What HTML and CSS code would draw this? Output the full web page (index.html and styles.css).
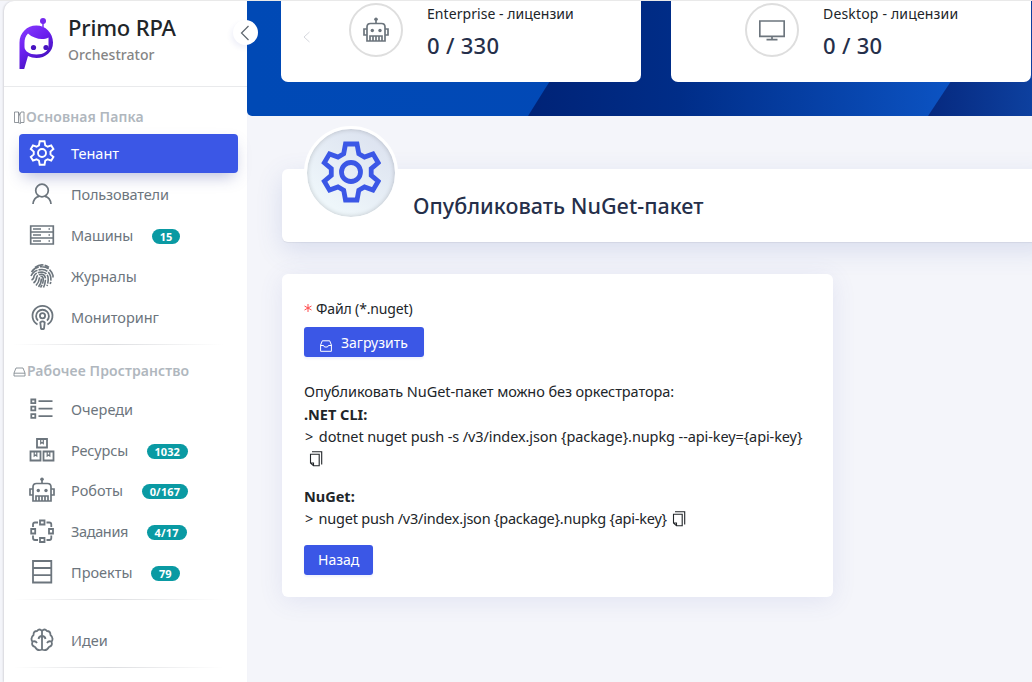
FILE: index.html
```html
<!DOCTYPE html>
<html lang="ru">
<head>
<meta charset="utf-8">
<title>Primo RPA Orchestrator</title>
<link rel="stylesheet" href="styles.css">
</head>
<body>
<svg class="defs" width="0" height="0" aria-hidden="true">
  <defs>
    <linearGradient id="logo" x1="0" y1="0" x2="0.6" y2="1"><stop offset="0" stop-color="#8a3dff"/><stop offset="0.5" stop-color="#6a1fee"/><stop offset="1" stop-color="#3d0fb4"/></linearGradient>
    <symbol id="gear" viewBox="0 0 60 62"><path fill="none" stroke="currentColor" d="M24.500 3h11.500l1.800 9.800 5.700 3.300 8.500-3.200 5.200 8.800-7 6v6.600l7 6-5.200 8.800-8.500-3.200-5.700 3.300-1.800 9.800h-11.500l-1.800-9.800-5.700-3.300-8.500 3.200-5.200-8.800 7-6v-6.600l-7-6 5.200-8.800 8.500 3.200 5.700-3.300z"/><circle cx="30" cy="31" r="9.500" fill="none" stroke="currentColor"/></symbol>
    <symbol id="robot" viewBox="0 0 26 26"><g fill="none" stroke="currentColor" stroke-width="1.700"><path d="M4 24V10q0-3.500 3.500-3.500h11q3.500 0 3.500 3.500v14zM13 3v3.500M4 12H1v6h3M22 12h3v6h-3M7 24v-5h12v5M10 19v5M13 19v5M16 19v5"/></g><g fill="currentColor"><circle cx="13" cy="2.200" r="1.800"/><circle cx="9.300" cy="13.500" r="1.700"/><circle cx="17" cy="13.500" r="1.700"/></g></symbol>
    <symbol id="copy" viewBox="0 0 14 16"><path fill="none" stroke="currentColor" stroke-width="1.100" d="M3 .8h9.700v12.700M1.500 3.200h8.700v11.600H4.500L1.500 12zM1.500 12h3v2.600"/></symbol>
  </defs>
</svg>
<div class="app">
  <aside class="sidebar">
    <header class="brand">
      <svg class="logo" width="34" height="52" viewBox="0 0 34 52"><path fill="url(#logo)" fill-rule="evenodd" d="M.5 51V24.500C.5 15 8 7.500 17.300 7.500S34 15 34 24.500 26.500 40 17.500 40c-3 0-6-.7-8.500-2L5.200 51zM5.500 25v4c0 4 5 7.500 12 7.500S29.500 33 29.500 28v-8.500C24 22.500 15 21 9 15.500 6.500 18 5.500 21 5.500 25z"/><path stroke="#7c35fa" stroke-width="1.500" d="M24 2v8"/><circle cx="24" cy="3" r="3" fill="#7529ee"/><circle cx="14.500" cy="29.500" r="2.600" fill="#4713c1"/><circle cx="27" cy="29.500" r="2.600" fill="#4713c1"/></svg>
      <div class="brand-text"><span class="brand-name">Primo RPA</span><span class="brand-sub">Orchestrator</span></div>
    </header>
    <nav class="nav">
      <h2 class="group"><svg width="12" height="13" viewBox="0 0 12 13" fill="none" stroke="#777e85" stroke-width=".8"><path d="M1.500 1h4v10.500h-4zM5.500 1L7 4.500l.5 8-2.500-1M6.500 4.500L8 1h3v10.500H8"/></svg><span>Основная Папка</span></h2>
      <a class="item active"><svg class="gear-sm" width="24" height="26"><use href="#gear"/></svg><span>Тенант</span></a>
      <a class="item"><svg width="26" height="26" viewBox="0 0 26 26" fill="none" stroke="currentColor" stroke-width="1.700"><circle cx="13" cy="9.500" r="6.300"/><path d="M4 23c.5-5 3-7 6-7.700M22 23c-.5-5-3-7-6-7.700"/></svg><span class="snug">Пользователи</span></a>
      <a class="item"><svg width="26" height="26" viewBox="0 0 26 26" fill="none" stroke="currentColor" stroke-width="1.700"><path d="M1.700 4h22.600v18H1.700zM1.700 10h22.600M1.700 16h22.600"/><path d="M4 7h8M4 13h8M4 19h8M19.500 7h1.500M19.500 13h1.500M19.500 19h1.500"/></svg><span class="snug">Машины</span><b class="badge">15</b></a>
      <a class="item"><svg width="26" height="26" viewBox="0 0 26 26" fill="none" stroke="currentColor" stroke-width="1.600" stroke-dasharray="9 1.200"><path d="M6 4.300Q13-.5 20 4.300M2.500 9Q7 3 13 3.800q8 0 11 8.700v2M2 13q3-6.500 11-6.500 6 0 8.500 6.500 1 4-.3 8M2.500 17q2.500-1 2.500-4 2-4 8-4 5 .5 6 5 .8 4-1 9M4.500 20q3-2 3.200-6 1-3 5.300-2.700 3.500.5 3.500 5-.2 4.500-2 8.200M7 22.500q3-3 3.400-7.500.5-2 2.600-1.500 1.500.5 1.200 4-.5 4-2.700 7M12.400 15.500q0 5-3 8.500"/></svg><span>Журналы</span></a>
      <a class="item"><svg width="26" height="26" viewBox="0 0 26 26" fill="none" stroke="currentColor" stroke-width="1.800"><path d="M8.500 20.500a10 10 0 1 1 10 0M9 16.700a6.400 6.400 0 1 1 9 0"/><circle cx="13.500" cy="11.800" r="2.600"/><path d="M11.300 18.500q2.200-2.200 4.400 0L15 24.500q-1.500 1.500-3 0z"/></svg><span>Мониторинг</span></a>
      <hr class="rule">
      <h2 class="group second"><svg width="13" height="12" viewBox="0 0 13 12" fill="none" stroke="#858c93" stroke-width=".9"><path d="M1 8l2-5h7l2 5v3H1zM1 8.200h11"/></svg><span>Рабочее Пространство</span></h2>
      <a class="item"><svg width="26" height="26" viewBox="0 0 26 26" fill="none" stroke="currentColor" stroke-width="1.800"><path d="M2.300 3.500h4v3.700h-4zM2.300 10.700h4v3.700h-4zM2.300 18.200h4v3.700h-4zM9.500 5.200H23.500M9.500 12.700H23.500M9.500 20.200H23.500"/></svg><span>Очереди</span></a>
      <a class="item compact"><svg width="26" height="26" viewBox="0 0 26 26" fill="none" stroke="currentColor" stroke-width="1.800"><path d="M8 2h10v8.500H8zM1.500 14.500h10v9h-10zM14.500 14.500h10v9h-10z"/><path d="M11.700 2.500v4l1.300-1 1.300 1v-4M5.200 15v4l1.300-1 1.300 1v-4M18.200 15v4l1.300-1 1.300 1v-4" stroke-width="1.200"/></svg><span class="snug">Ресурсы</span><b class="badge">1032</b></a>
      <a class="item"><svg width="26" height="26"><use href="#robot"/></svg><span>Роботы</span><b class="badge wide">0/167</b></a>
      <a class="item"><svg width="26" height="26" viewBox="0 0 26 26" fill="none" stroke="currentColor" stroke-width="1.800"><path d="M11 2.500h4.500v4H11zM11 20h4.500v4H11zM2.200 11h4v4.500h-4zM20 11h4v4.500h-4zM9 4.500H6q-2 0-2 2V9M17.500 4.500h2.800q2 0 2 2V9M9 22H6q-2 0-2-2v-2.500M17.500 22h2.800q2 0 2-2v-2.500"/></svg><span class="tight">Задания</span><b class="badge wide">4/17</b></a>
      <a class="item"><svg width="26" height="26" viewBox="0 0 26 26" fill="none" stroke="currentColor" stroke-width="1.800"><path d="M4 2h18.300v21.500H4zM4 9h18.300M4 16.200h18.300"/></svg><span>Проекты</span><b class="badge">79</b></a>
      <hr class="rule">
      <a class="item last"><svg width="26" height="26" viewBox="0 0 26 26" fill="none" stroke="currentColor" stroke-width="1.800"><path d="M13 4q-2.500-3-5 0-3.500 0-3.500 4Q1 11 3.500 15q-1.500 3.500 2.500 5 2.500 4.500 7 2.500 4.500 2 7-2.500 4-1.500 2.500-5 2.500-4-1-7 0-4-3.500-4-2.500-3-5 0zM13 4v18.500M13 9q-3 0-3.500 3M13 9q3 0 3.500 3M3.500 14.500q3-1 4.500 1.500M22.500 14.500q-3-1-4.500 1.500"/></svg><span>Идеи</span></a>
      <hr class="rule">
    </nav>
    <button class="collapse" aria-label="Свернуть"><svg width="10" height="16" viewBox="0 0 10 16" fill="none" stroke="#5e666e" stroke-width="1.200"><path d="M8.500 1L1.500 8l7 7"/></svg></button>
  </aside>
  <main class="main">
    <section class="hero">
      <svg class="hero-bg" viewBox="0 0 785 115" preserveAspectRatio="none"><defs><linearGradient id="ha"><stop offset="0" stop-color="#0049b5"/><stop offset="1" stop-color="#0449b8"/></linearGradient><linearGradient id="hb"><stop offset="0" stop-color="#002377"/><stop offset=".3" stop-color="#002d88"/><stop offset=".85" stop-color="#0c54c4"/></linearGradient><linearGradient id="hc"><stop offset="0" stop-color="#06297f"/><stop offset="1" stop-color="#0d409f"/></linearGradient></defs><path fill="url(#ha)" d="M0 0h785v115H0z"/><path fill="url(#hb)" d="M281 115L353 0h432v115z"/><path fill="url(#hc)" d="M681 115L757 0h28v115z"/></svg>
      <article class="license"><svg class="prev" width="8" height="12" viewBox="0 0 8 12" fill="none" stroke="#d5d7dd"><path d="M6.500 1L1 6l5.500 5"/></svg><div class="ring"><svg width="26" height="26"><use href="#robot"/></svg></div><div class="figures"><span class="lic-name">Enterprise - лицензии</span><strong class="lic-count">0 / 330</strong></div></article>
      <article class="license"><div class="ring"><svg width="26" height="26" viewBox="0 0 26 26" fill="none" stroke="currentColor" stroke-width="1.700"><path d="M.8 4h24.400v15.300H.8zM13 19.500V22M7.500 22.600h11"/></svg></div><div class="figures"><span class="lic-name desktop">Desktop - лицензии</span><strong class="lic-count">0 / 30</strong></div></article>
    </section>
    <section class="title-card"><div class="title-icon"><svg class="gear-lg" width="60" height="62"><use href="#gear"/></svg></div><h1>Опубликовать NuGet-пакет</h1></section>
    <section class="form-card">
      <label class="file-label"><svg width="8" height="8" viewBox="0 0 8 8" stroke="#ff4d4f"><path d="M4 0v8M.5 2l7 4M7.500 2l-7 4"/></svg><span>Файл (*.nuget)</span></label>
      <button class="btn upload"><svg width="12" height="12" viewBox="0 0 12 12" fill="none" stroke="#fff"><path d="M.6 5L2.300.8h7.400L11.400 5v6.300H.6zM.6 5.500h3L4.500 7h3l.9-1.500h3"/></svg><span>Загрузить</span></button>
      <p class="text intro">Опубликовать NuGet-пакет можно без оркестратора:</p>
      <p class="text strong">.NET CLI:</p>
      <p class="text command"><span class="prompt">&gt;</span> dotnet nuget push -s /v3/index.json {package}.nupkg --api-key={api-key}</p>
      <p class="text icon-line"><svg width="14" height="16"><use href="#copy"/></svg></p>
      <p class="text strong nuget">NuGet:</p>
      <p class="text with-icon"><span><span class="prompt">&gt;</span> nuget push /v3/index.json {package}.nupkg {api-key}</span><svg width="14" height="16"><use href="#copy"/></svg></p>
      <button class="btn back"><span>Назад</span></button>
    </section>
  </main>
</div>
</body>
</html>
```
FILE: styles.css
```css
* { box-sizing: border-box; }
body { margin: 0; background: #f4f5fa; color: #212529; font-family: "Noto Sans", "Open Sans", sans-serif; font-size: 15px; }
.defs { position: absolute; }
.app { display: flex; width: 1032px; height: 682px; overflow: hidden; border-top: 1px solid #e9e9e9; padding-left: 4px; }
.sidebar { position: relative; flex: 0 0 243px; height: 681px; background: #fff; border-radius: 10px 0 0 0; box-shadow: -1px 0 2px rgba(0,0,0,.12); }
.brand { display: flex; height: 86px; padding: 14px 0 0 15px; border-bottom: 1px solid #e9eaec; }
.logo { flex: none; margin-top: 3px; }
.brand-text { display: flex; flex-direction: column; margin-left: 15px; }
.brand-name { font-size: 22px; font-weight: 500; line-height: 24px; letter-spacing: -.17px; }
.brand-sub { font-size: 14px; font-weight: 500; line-height: 20px; margin-top: 6px; letter-spacing: .05px; color: #858585; }
.nav { padding: 20px 9px 0; }
.group { display: flex; align-items: center; gap: 1px; height: 20px; margin: 0 0 7px; font-size: 14px; font-weight: 600; letter-spacing: .1px; color: #b0b7be; }
.group span { padding-bottom: 2px; }
.group.second { margin: 16px 0 9px; }
.item { display: flex; align-items: center; height: 39px; margin: 0 0 2px 6px; padding: 0 0 2px 10px; font-size: 14.500px; color: #6c757d; border-radius: 4px; white-space: nowrap; }
.item.compact { margin-bottom: 1px; }
.item svg { flex: none; width: 26px; }
.item span { margin-left: 16px; }
.item .snug { letter-spacing: -.15px; }
.item .tight { letter-spacing: -.36px; }
.active { background: #3b57e6; color: #fff; box-shadow: 0 7px 16px -4px rgba(50,60,150,.35); }
.gear-sm { stroke-width: 4.600; }
.badge { height: 15px; margin: 3px 0 0 18.500px; padding: 0 8px; border-radius: 8px; background: #0a9aa3; color: #fff; font-size: 11px; font-weight: 700; line-height: 15px; }
.badge.wide { letter-spacing: .2px; }
.rule { height: 1px; margin: 7px 15px 0 0; border: 0; background: linear-gradient(90deg, transparent, #dcdde0 45%, transparent); }
.last { margin-top: 21px; }
.collapse { position: absolute; z-index: 3; left: 229px; top: 19px; display: flex; align-items: center; justify-content: center; width: 25px; height: 25px; padding: 0 1px 0 0; border: 0; border-radius: 50%; background: #fff; box-shadow: -2px 3px 5px rgba(60,80,180,.08); }
.main { flex: 1; min-width: 0; }
.hero { position: relative; display: flex; gap: 30px; height: 115px; padding-left: 34px; border-radius: 0 0 0 5px; overflow: hidden; }
.hero-bg { position: absolute; inset: 0; width: 100%; height: 100%; }
.license { position: relative; flex: 0 0 360px; display: flex; height: 81px; padding: 2px 0 0 68px; border-radius: 0 0 7px 7px; background: #fff; }
.license + .license { padding-left: 74px; }
.prev { position: absolute; left: 22px; top: 30px; }
.ring { display: flex; align-items: center; justify-content: center; flex: none; width: 54px; height: 54px; border: 2px solid #dedede; border-radius: 50%; color: #6c757d; }
.figures { display: flex; flex-direction: column; margin-left: 24px; }
.lic-name { font-size: 14px; line-height: 22px; letter-spacing: .06px; }
.desktop { letter-spacing: .17px; }
.lic-count { font-size: 22px; line-height: 32px; font-weight: 500; letter-spacing: .3px; color: #252f4a; margin-top: 4px; }
.title-card { display: flex; height: 73px; margin: 53px -20px 0 35px; padding-left: 22px; background: #fff; border-radius: 6px; box-shadow: 0 8px 26px rgba(80,100,180,.17), 0 1px 1px rgba(0,0,0,.06); }
.title-icon { display: flex; align-items: center; justify-content: center; flex: none; width: 94px; height: 94px; margin-top: -43px; padding-bottom: 2px; border: 3px solid #fff; border-radius: 50%; color: #3b57e6; background: linear-gradient(215deg, #d9dfee, #eef6fa 80%); box-shadow: inset 0 0 5px rgba(0,0,0,.2); }
.gear-lg { stroke-width: 4.800; }
.title-card h1 { margin: 21px 0 0 15px; font-size: 21.500px; line-height: 32px; font-weight: 500; letter-spacing: .03px; color: #252f4a; white-space: nowrap; }
.form-card { width: 551px; height: 323px; margin: 32px 0 0 35px; padding: 23px 22px; background: #fff; border-radius: 6px; box-shadow: 0 4px 24px rgba(80,90,180,.11); }
.file-label { display: flex; align-items: center; gap: 4px; height: 22px; font-size: 14px; letter-spacing: -.14px; }
.btn { display: flex; align-items: center; height: 30px; padding: 0 14px; border: 0; border-radius: 3px; background: #3b57e6; color: #fff; font: 14px "Noto Sans", sans-serif; box-shadow: 0 2px 2px rgba(59,87,230,.08); }
.upload { width: 120px; margin-top: 8px; padding: 0 0 0 16px; gap: 9px; }
.upload svg { margin-top: 8px; }
.text { display: flex; margin: 0; height: 22.500px; line-height: 22.500px; font-size: 14.500px; white-space: nowrap; }
.intro { margin-top: 23px; letter-spacing: -.08px; }
.strong { font-weight: 700; }
.command { display: block; letter-spacing: -.1px; }
.prompt { display: inline-block; padding: 0 2px 0 1px; }
.icon-line, .with-icon { align-items: center; }
.icon-line { padding-left: 5px; }
.nuget { margin-top: 14.500px; }
.with-icon { letter-spacing: -.23px; }
.with-icon svg { margin: 1px 0 0 5px; }
.back { width: 69px; margin-top: 15.500px; padding-bottom: 2px; }
```
